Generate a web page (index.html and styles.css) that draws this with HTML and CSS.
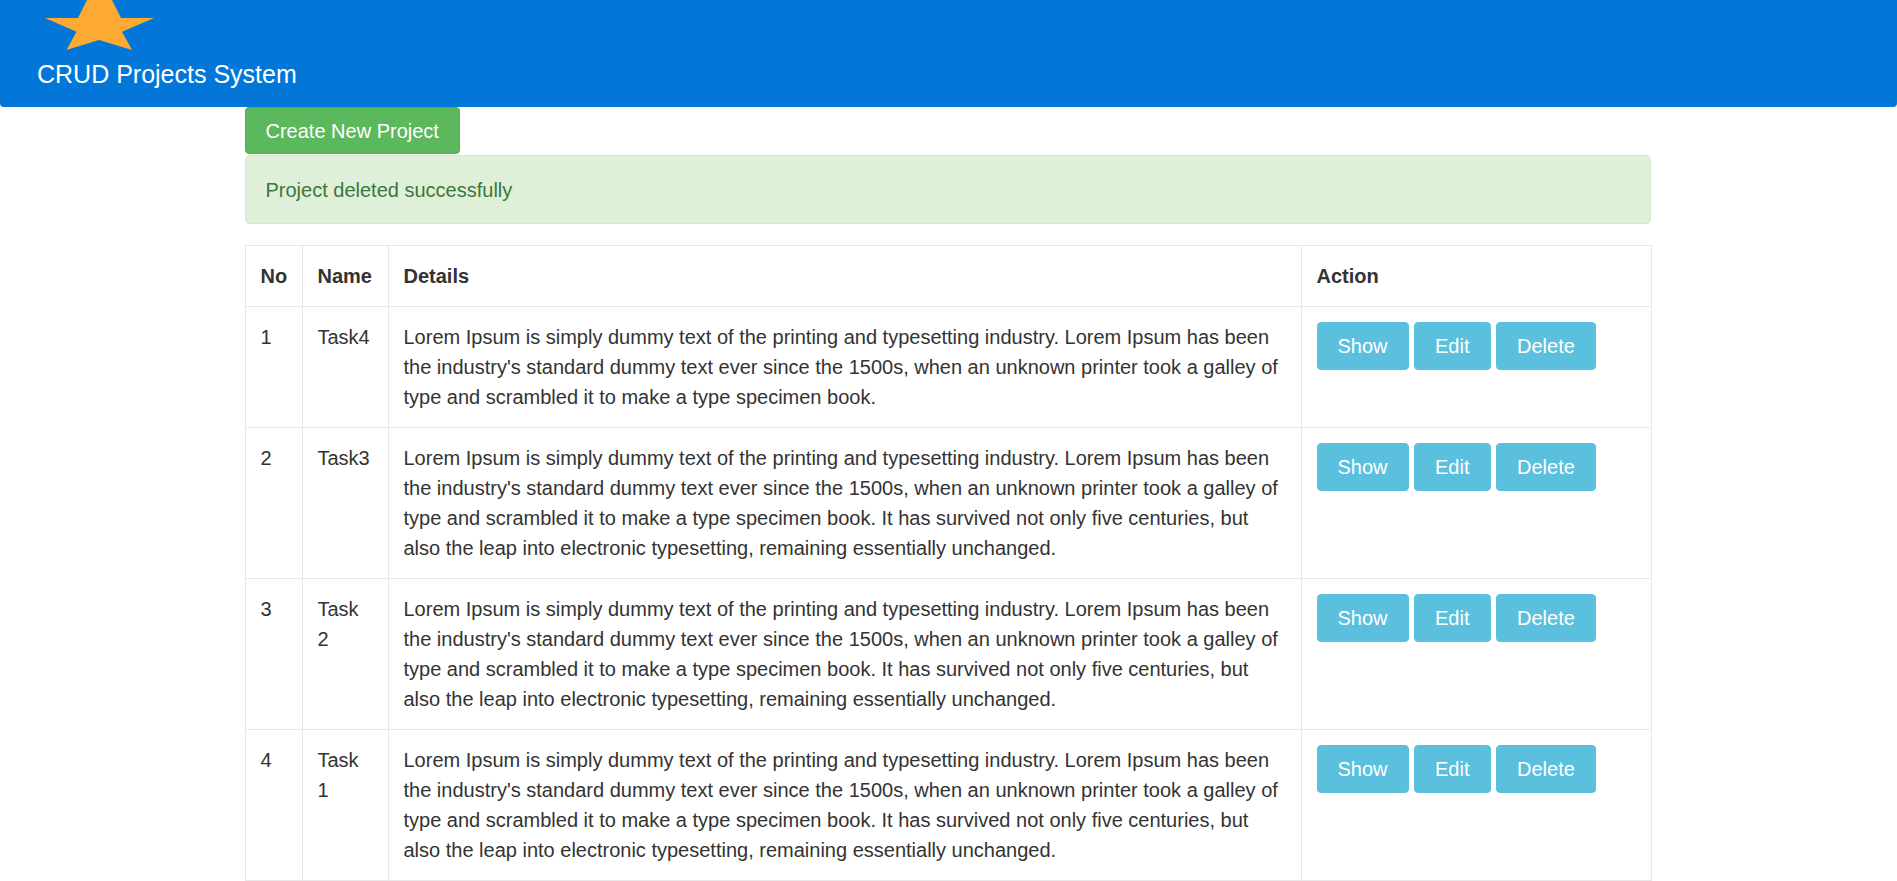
FILE: index.html
```html
<!DOCTYPE html>
<html lang="en">
<head>
<meta charset="utf-8">
<title>CRUD Projects System</title>
<link rel="stylesheet" href="styles.css">
</head>
<body>
<header class="topbar">
  <svg class="logo" width="110" height="50" viewBox="45 0 110 50" aria-hidden="true">
    <polygon fill="#fcaa32" points="99.5,-25 121,18 154,18 122,31.7 132,50 99,40 66.5,50 76.5,31.7 45,18 78,18"/>
  </svg>
  <div class="brand">CRUD Projects System</div>
</header>

<main class="container">
  <div class="toolbar">
    <a class="btn btn-success" href="#">Create New Project</a>
  </div>
  <div class="alert alert-success">Project deleted successfully</div>

  <table class="table">
    <colgroup>
      <col class="c-no">
      <col class="c-name">
      <col class="c-details">
      <col class="c-action">
    </colgroup>
    <thead>
      <tr><th>No</th><th>Name</th><th>Details</th><th>Action</th></tr>
    </thead>
    <tbody>
      <tr>
        <td>1</td>
        <td>Task4</td>
        <td>Lorem Ipsum is simply dummy text of the printing and typesetting industry. Lorem Ipsum has been the industry's standard dummy text ever since the 1500s, when an unknown printer took a galley of type and scrambled it to make a type specimen book.</td>
        <td><div class="actions"><a class="btn btn-info" href="#">Show</a><a class="btn btn-info" href="#">Edit</a><a class="btn btn-info" href="#">Delete</a></div></td>
      </tr>
      <tr>
        <td>2</td>
        <td>Task3</td>
        <td>Lorem Ipsum is simply dummy text of the printing and typesetting industry. Lorem Ipsum has been the industry's standard dummy text ever since the 1500s, when an unknown printer took a galley of type and scrambled it to make a type specimen book. It has survived not only five centuries, but also the leap into electronic typesetting, remaining essentially unchanged.</td>
        <td><div class="actions"><a class="btn btn-info" href="#">Show</a><a class="btn btn-info" href="#">Edit</a><a class="btn btn-info" href="#">Delete</a></div></td>
      </tr>
      <tr>
        <td>3</td>
        <td>Task 2</td>
        <td>Lorem Ipsum is simply dummy text of the printing and typesetting industry. Lorem Ipsum has been the industry's standard dummy text ever since the 1500s, when an unknown printer took a galley of type and scrambled it to make a type specimen book. It has survived not only five centuries, but also the leap into electronic typesetting, remaining essentially unchanged.</td>
        <td><div class="actions"><a class="btn btn-info" href="#">Show</a><a class="btn btn-info" href="#">Edit</a><a class="btn btn-info" href="#">Delete</a></div></td>
      </tr>
      <tr>
        <td>4</td>
        <td>Task 1</td>
        <td>Lorem Ipsum is simply dummy text of the printing and typesetting industry. Lorem Ipsum has been the industry's standard dummy text ever since the 1500s, when an unknown printer took a galley of type and scrambled it to make a type specimen book. It has survived not only five centuries, but also the leap into electronic typesetting, remaining essentially unchanged.</td>
        <td><div class="actions"><a class="btn btn-info" href="#">Show</a><a class="btn btn-info" href="#">Edit</a><a class="btn btn-info" href="#">Delete</a></div></td>
      </tr>
    </tbody>
  </table>
</main>
</body>
</html>
```

FILE: styles.css
```css
* { box-sizing: border-box; }

html, body {
  margin: 0;
  padding: 0;
  background: #fff;
}

body {
  font-family: "Liberation Sans", Arial, Helvetica, sans-serif;
  font-size: 20px;
  line-height: 30px;
  color: #333;
}

.topbar {
  height: 107px;
  background: #0277d8;
  border-radius: 0 0 4px 4px;
  padding-left: 37px;
  overflow: hidden;
}

.logo {
  display: block;
  margin-left: 8px;
}

.brand {
  margin-top: 9px;
  font-size: 25px;
  line-height: 30px;
  color: #fff;
}

.container {
  width: 1408px;
  margin: 0 auto;
  padding-right: 2px;
}

.toolbar {
  display: flex;
}

.btn {
  display: inline-block;
  font-size: 20px;
  line-height: 30px;
  color: #fff;
  text-decoration: none;
  border: 1px solid transparent;
  border-radius: 4px;
  white-space: nowrap;
}

.btn-success {
  background: #5cb85c;
  border-color: #4cae4c;
  padding: 7.5px 20px;
}

.btn-info {
  background: #5bc0de;
  border-color: #5bc0de;
  padding: 8px 20px;
}

.alert {
  margin-top: 1px;
  margin-bottom: 21px;
  padding: 18.5px 20px;
  border: 1px solid #d6e9c6;
  border-radius: 5px;
  background: #dff0d8;
  color: #3c763d;
}

.table {
  width: 100%;
  table-layout: fixed;
  border-collapse: collapse;
  border: 1px solid #e8e8e8;
}

.c-no { width: 57px; }
.c-name { width: 86px; }
.c-details { width: 913px; }
.c-action { width: 350px; }

.table th,
.table td {
  border: 1px solid #e8e8e8;
  padding: 15px;
  text-align: left;
  vertical-align: top;
}

.table th {
  font-weight: bold;
}

.actions {
  display: flex;
  gap: 5.5px;
}
```
